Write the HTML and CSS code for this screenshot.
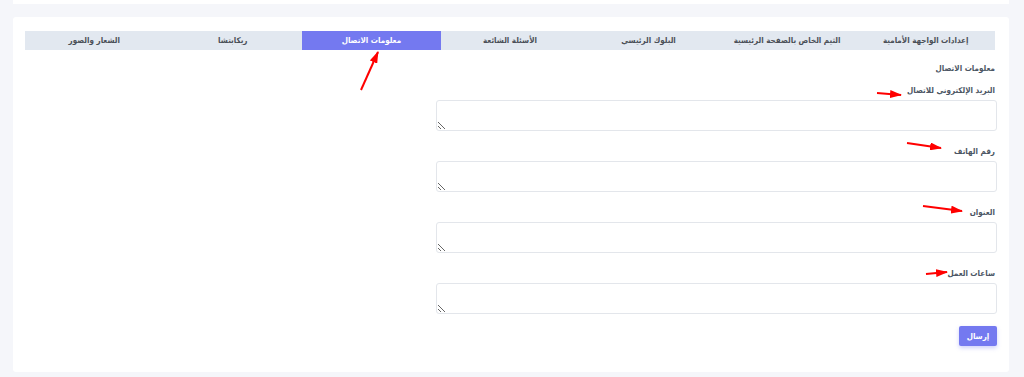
FILE: index.html
```html
<!DOCTYPE html>
<html lang="ar" dir="rtl">
<head>
    <meta charset="UTF-8">
    <meta name="viewport" content="width=device-width, initial-scale=1.0">
    <title>إعدادات الواجهة الأمامية</title>
    <link rel="stylesheet" href="styles.css">
</head>
<body>
    <div class="top-card"></div>

    <div class="card">
        <div class="tabs">
            <div class="tab">إعدادات الواجهة الأمامية</div>
            <div class="tab">الثيم الخاص بالصفحة الرئيسية</div>
            <div class="tab">البلوك الرئيسي</div>
            <div class="tab">الأسئلة الشائعة</div>
            <div class="tab active">معلومات الاتصال</div>
            <div class="tab">ريكابتشا</div>
            <div class="tab">الشعار والصور</div>
        </div>

        <form class="panel">
            <h4 class="panel-title">معلومات الاتصال</h4>

            <div class="field">
                <label for="contact-email">البريد الإلكتروني للاتصال</label>
                <textarea id="contact-email" name="contact_email"></textarea>
            </div>

            <div class="field">
                <label for="contact-phone">رقم الهاتف</label>
                <textarea id="contact-phone" name="contact_phone"></textarea>
            </div>

            <div class="field">
                <label for="contact-address">العنوان</label>
                <textarea id="contact-address" name="contact_address"></textarea>
            </div>

            <div class="field">
                <label for="working-hours">ساعات العمل</label>
                <textarea id="working-hours" name="working_hours"></textarea>
            </div>

            <button type="submit" class="btn">إرسال</button>
        </form>
    </div>

    <!-- annotation arrows drawn over the screenshot -->
    <svg class="arrows" width="1024" height="377" viewBox="0 0 1024 377">
        <defs>
            <marker id="head" markerWidth="6" markerHeight="4" refX="5.5" refY="2" orient="auto" markerUnits="strokeWidth">
                <path d="M0,0 L6,2 L0,4 Z" fill="#f00"/>
            </marker>
        </defs>
        <line x1="361" y1="90" x2="378" y2="52" stroke="#f00" stroke-width="2" marker-end="url(#head)"/>
        <line x1="877" y1="93" x2="901" y2="95" stroke="#f00" stroke-width="2" marker-end="url(#head)"/>
        <line x1="907" y1="143" x2="941" y2="148" stroke="#f00" stroke-width="2" marker-end="url(#head)"/>
        <line x1="923" y1="206" x2="962" y2="211" stroke="#f00" stroke-width="2" marker-end="url(#head)"/>
        <line x1="926" y1="274" x2="947" y2="272" stroke="#f00" stroke-width="2" marker-end="url(#head)"/>
    </svg>
</body>
</html>
```

FILE: styles.css
```css
body {
    margin: 0;
    background-color: #f5f6fa;
    font-family: "DejaVu Sans Condensed", "DejaVu Sans", sans-serif;
    font-stretch: condensed;
    font-size: 8px;
    color: #4b5563;
    position: relative;
}
.top-card {
    height: 4px;
    margin: 0 15px 0 13px;
    background-color: #fff;
}
.card {
    margin: 13px 15px 0 13px;
    padding: 14px 14px 26px 12px;
    background-color: #fff;
    border-radius: 3px;
}
.tabs {
    display: flex;
    background-color: #e2e8f0;
    height: 19px;
}
.tab {
    flex: 1;
    text-align: center;
    line-height: 19px;
    font-weight: bold;
    color: #4a4f57;
    white-space: nowrap;
}
.tab.active {
    background-color: #7479f0;
    color: #fff;
}
.panel {
    padding-top: 13px;
    display: flex;
    flex-direction: column;
    align-items: flex-start;
}
.panel-title {
    margin: 0 0 10px 0;
    font-size: 8px;
    line-height: 12px;
    font-weight: bold;
    color: #4b5563;
}
.field {
    display: flex;
    flex-direction: column;
    align-items: flex-start;
    margin-bottom: 15px;
}
.field label {
    line-height: 12px;
    margin-bottom: 3px;
    font-weight: bold;
    color: #4b5563;
}
.field textarea {
    box-sizing: border-box;
    width: 561px;
    height: 31px;
    margin: 0 -2px 0 0;
    border: 1px solid #e3e6eb;
    border-radius: 3px;
    background: #fff;
    resize: vertical;
}
.btn {
    margin-top: -3px;
    margin-right: -2px;
    width: 38px;
    height: 20px;
    padding: 0;
    border: none;
    border-radius: 2px;
    background-color: #7479f0;
    color: #fff;
    font-family: "DejaVu Sans Condensed", "DejaVu Sans", sans-serif;
    font-stretch: condensed;
    font-size: 8px;
    font-weight: bold;
    box-shadow: 0 2px 4px rgba(115, 121, 240, 0.35);
}
.arrows {
    position: absolute;
    top: 0;
    left: 0;
    pointer-events: none;
}
```
